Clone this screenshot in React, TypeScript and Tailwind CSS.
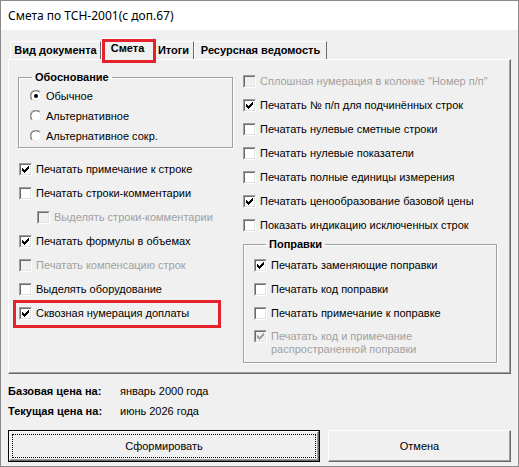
import React from "react";

function Tick({ color = "#000" }: { color?: string }) {
  return (
    <svg width="9" height="9" viewBox="0 0 9 9" shapeRendering="crispEdges" className="block">
      <path
        fill={color}
        d="M1 3h1v3H1z M2 4h1v3H2z M3 5h1v3H3z M4 4h1v3H4z M5 3h1v3H5z M6 2h1v3H6z M7 1h1v3H7z"
      />
    </svg>
  );
}

function Box({ checked = false, disabled = false }: { checked?: boolean; disabled?: boolean }) {
  return (
    <span className="inline-block w-[13px] h-[13px] shrink-0 border border-t-[#a0a0a0] border-l-[#a0a0a0] border-b-white border-r-white">
      <span
        className={
          "flex items-center justify-center w-[11px] h-[11px] border border-t-[#696969] border-l-[#696969] border-b-[#e3e3e3] border-r-[#e3e3e3] " +
          (disabled ? "bg-[#f0f0f0]" : "bg-white")
        }
      >
        {checked && <Tick color={disabled ? "#a0a0a0" : "#000"} />}
      </span>
    </span>
  );
}

function Radio({ on = false }: { on?: boolean }) {
  return (
    <svg width="12" height="12" viewBox="0 0 12 12" className="block shrink-0">
      <circle cx="6" cy="6" r="5.5" fill="#fff" />
      <path d="M1.6 10.4 A5.5 5.5 0 0 1 10.4 1.6" fill="none" stroke="#a0a0a0" strokeWidth="1" />
      <path d="M2.3 9.7 A4.5 4.5 0 0 1 9.7 2.3" fill="none" stroke="#696969" strokeWidth="1" />
      <path d="M10.4 1.6 A5.5 5.5 0 0 1 1.6 10.4" fill="none" stroke="#ffffff" strokeWidth="1" />
      <path d="M9.7 2.3 A4.5 4.5 0 0 1 2.3 9.7" fill="none" stroke="#e3e3e3" strokeWidth="1" />
      {on && <circle cx="6" cy="6" r="2" fill="#000" />}
    </svg>
  );
}

function Check({
  label,
  checked = false,
  disabled = false,
  className = "",
}: {
  label: string;
  checked?: boolean;
  disabled?: boolean;
  className?: string;
}) {
  return (
    <div className={"flex items-center h-[24px] gap-[4px] " + className}>
      <Box checked={checked} disabled={disabled} />
      <span className={"whitespace-nowrap " + (disabled ? "text-[#a0a0a0]" : "text-black")}>{label}</span>
    </div>
  );
}

function RadioRow({ label, on = false }: { label: string; on?: boolean }) {
  return (
    <div className="flex items-center h-[20px] gap-[4px] pl-[11px]">
      <Radio on={on} />
      <span className="whitespace-nowrap">{label}</span>
    </div>
  );
}

export default function App() {
  return (
    <div className="w-[519px] h-[467px] overflow-hidden border border-[#8a8a8a] bg-[#f0f0f0] text-[11px] leading-[13px] text-black font-['Liberation_Sans',Arial,sans-serif]">
      {/* Title bar */}
      <div className="h-[29px] bg-white flex items-center pl-[7px] pb-[1px]">
        <span className="text-[12px] font-['Noto_Sans',sans-serif] whitespace-nowrap">Смета по ТСН-2001(с доп.67)</span>
      </div>

      {/* Tabs */}
      <div className="relative z-10 flex items-end h-[21px] mt-[8px] ml-[9px] font-bold">
        <div className="h-[18px] w-[91px] flex items-center justify-center border-t border-l border-white border-r border-r-[#696969] rounded-tl-[2px]">
          Вид документа
        </div>
        <div className="relative h-[22px] w-[53px] -mb-[1px] bg-[#f0f0f0] flex items-center justify-center pb-[3px] border-t border-l border-white border-r border-r-[#696969] rounded-tl-[2px]">
          Смета
          <div className="absolute left-0 top-0 w-[54px] h-[24px] border-[3px] border-[#e5222c]" />
        </div>
        <div className="h-[18px] w-[40px] flex items-center justify-center border-t border-white border-r border-r-[#696969]">
          Итоги
        </div>
        <div className="h-[18px] w-[133px] flex items-center justify-center border-t border-l border-white border-r border-r-[#696969]">
          Ресурсная ведомость
        </div>
      </div>

      {/* Panel */}
      <div className="ml-[7px] w-[503px] h-[315px] border border-t-white border-l-white border-r-[#696969] border-b-[#696969] shadow-[inset_-1px_-1px_0_#a0a0a0] pl-[9px] pt-[10px] flex">
        {/* Left column */}
        <div className="w-[225px] shrink-0">
          <fieldset className="w-[215px] border border-[#a0a0a0] shadow-[inset_1px_1px_0_#fff,1px_1px_0_#fff] pt-[2px] pb-[1px]">
            <legend className="ml-[13px] px-[3px] font-bold leading-[14px]">Обоснование</legend>
            <RadioRow label="Обычное" on />
            <RadioRow label="Альтернативное" />
            <RadioRow label="Альтернативное сокр." />
          </fieldset>
          <div className="mt-[9px] pl-[1px]">
            <Check label="Печатать примечание к строке" checked />
            <Check label="Печатать строки-комментарии" />
            <Check label="Выделять строки-комментарии" disabled className="pl-[18px]" />
            <Check label="Печатать формулы в объемах" checked />
            <Check label="Печатать компенсацию строк" disabled />
            <Check label="Выделять оборудование" />
            <div className="relative">
              <Check label="Сквозная нумерация доплаты" checked />
              <div className="absolute left-[-6px] top-[-1px] w-[208px] h-[28px] border-[3px] border-[#e5222c]" />
            </div>
          </div>
        </div>

        {/* Right column */}
        <div className="w-[254px] shrink-0 -mt-[1px]">
          <Check label={'Сплошная нумерация в колонке "Номер п/п"'} disabled />
          <Check label="Печатать № п/п для подчинённых строк" checked />
          <Check label="Печатать нулевые сметные строки" />
          <Check label="Печатать нулевые показатели" />
          <Check label="Печатать полные единицы измерения" />
          <Check label="Печатать ценообразование базовой цены" checked />
          <Check label="Показать индикацию исключенных строк" />
          <fieldset className="w-[254px] border border-[#a0a0a0] shadow-[inset_1px_1px_0_#fff,1px_1px_0_#fff] pt-[2px] pb-[6px] pl-[10px]">
            <legend className="ml-[12px] px-[3px] font-bold leading-[14px]">Поправки</legend>
            <Check label="Печатать заменяющие поправки" checked />
            <Check label="Печатать код поправки" />
            <Check label="Печатать примечание к поправке" />
            <div className="flex items-start gap-[4px] mt-[5px]">
              <Box checked disabled />
              <span className="text-[#a0a0a0] leading-[13px]">
                Печатать код и примечание
                <br />
                распространенной поправки
              </span>
            </div>
          </fieldset>
        </div>
      </div>

      {/* Prices */}
      <div className="mt-[7px] pl-[7px]">
        <div className="flex items-center h-[20px]">
          <span className="w-[112px] font-bold">Базовая цена на:</span>
          <span>январь 2000 года</span>
        </div>
        <div className="flex items-center h-[20px]">
          <span className="w-[112px] font-bold">Текущая цена на:</span>
          <span>июнь 2026 года</span>
        </div>
      </div>

      {/* Buttons */}
      <div className="mt-[9px] pl-[7px] flex gap-[8px]">
        <div className="w-[312px] h-[32px] border border-black">
          <div className="w-full h-full border border-t-white border-l-white border-r-[#696969] border-b-[#696969] shadow-[inset_-1px_-1px_0_#a0a0a0] p-[2px]">
            <div className="w-full h-full border border-dotted border-black flex items-center justify-center">
              Сформировать
            </div>
          </div>
        </div>
        <div className="w-[183px] h-[32px] border border-t-white border-l-white border-r-[#696969] border-b-[#696969] shadow-[inset_-1px_-1px_0_#a0a0a0] flex items-center justify-center">
          Отмена
        </div>
      </div>
    </div>
  );
}
